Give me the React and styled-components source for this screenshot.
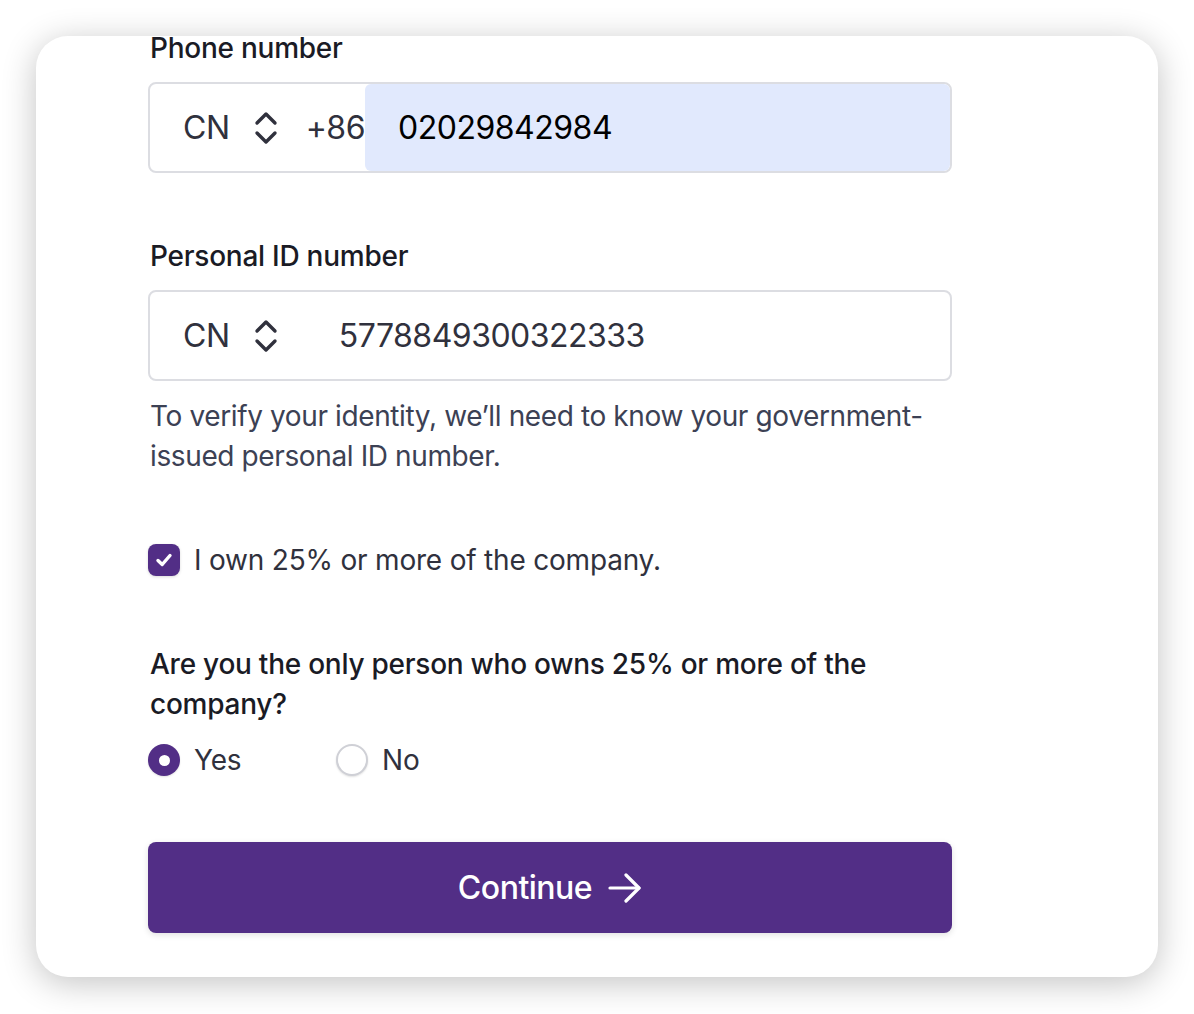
import React, { useState } from 'react';
import styled, { createGlobalStyle } from 'styled-components';

const GlobalStyle = createGlobalStyle`
  html, body {
    margin: 0;
    padding: 0;
    background: #ffffff;
  }
  body {
    font-family: Inter, "Noto Sans", "Liberation Sans", sans-serif;
    -webkit-font-smoothing: antialiased;
  }
  * {
    box-sizing: border-box;
  }
`;

const Page = styled.div`
  padding: 36px;
  width: 1194px;
  height: 1014px;
`;

const Card = styled.div`
  width: 1122px;
  height: 941px;
  background: #ffffff;
  border-radius: 32px;
  box-shadow: 0 6px 34px rgba(0, 0, 0, 0.24);
  padding: 0 206px 44px 112px;
  display: flex;
  flex-direction: column;
`;

const Label = styled.label`
  display: block;
  font-size: 28px;
  font-weight: 500;
  letter-spacing: -0.25px;
  color: #1a1b25;
  line-height: ${p => p.$lh || 40}px;
  margin-top: ${p => p.$mt || 0}px;
  margin-bottom: ${p => p.$mb || 0}px;
  padding-left: 2px;
`;

const InputBox = styled.div`
  display: flex;
  align-items: stretch;
  height: 91px;
  border: 2px solid #dcdde2;
  border-radius: 8px;
  background: #ffffff;
  overflow: hidden;
`;

const CountrySelect = styled.div`
  display: flex;
  align-items: center;
  gap: 24px;
  padding-left: 33px;
  font-size: 32px;
  letter-spacing: -0.4px;
  color: #30313d;
`;

const Prefix = styled.span`
  display: flex;
  align-items: center;
  margin-left: 28px;
  font-size: 32px;
  letter-spacing: -0.5px;
  color: #30313d;
`;

const Field = styled.input`
  flex: 1;
  min-width: 0;
  border: none;
  outline: none;
  margin: 0;
  font-family: inherit;
  font-size: 32px;
  letter-spacing: -0.5px;
  padding: 0 0 0 ${p => p.$pl}px;
  color: ${p => (p.$autofill ? '#000000' : '#30313d')};
  background: ${p => (p.$autofill ? '#e1e9fd' : 'transparent')};
  border-radius: ${p => (p.$autofill ? '6px' : '0')};
`;

const Help = styled.p`
  margin: 15px 0 0;
  padding-left: 2px;
  font-size: 28px;
  line-height: 40px;
  letter-spacing: -0.38px;
  color: #3c4154;
`;

const CheckRow = styled.label`
  display: flex;
  align-items: center;
  gap: 14px;
  height: 40px;
  margin-top: 64px;
  font-size: 28px;
  letter-spacing: -0.2px;
  color: #30313d;
`;

const CheckBox = styled.span`
  width: 32px;
  height: 32px;
  border-radius: 8px;
  background: #522e86;
  display: flex;
  align-items: center;
  justify-content: center;
  box-shadow: 0 1px 3px rgba(0, 0, 0, 0.15);
`;

const RadioGroup = styled.div`
  display: grid;
  grid-template-columns: 188px auto;
  margin-top: 16px;
  height: 40px;
`;

const Option = styled.label`
  display: flex;
  align-items: center;
  gap: 14px;
  font-size: 28px;
  letter-spacing: -0.2px;
  color: #30313d;
  cursor: pointer;
`;

const RadioDot = styled.span`
  width: 32px;
  height: 32px;
  border-radius: 50%;
  display: flex;
  align-items: center;
  justify-content: center;
  background: ${p => (p.$on ? '#522e86' : '#ffffff')};
  border: ${p => (p.$on ? 'none' : '2px solid #cfd0d6')};
  box-shadow: 0 1px 2px rgba(0, 0, 0, 0.12);

  &::after {
    content: '';
    display: ${p => (p.$on ? 'block' : 'none')};
    width: 11px;
    height: 11px;
    border-radius: 50%;
    background: #ffffff;
  }
`;

const Button = styled.button`
  margin-top: 62px;
  height: 91px;
  width: 100%;
  border: none;
  border-radius: 8px;
  background: #522e86;
  color: #ffffff;
  font-family: inherit;
  font-size: 32px;
  font-weight: 500;
  letter-spacing: -0.5px;
  display: flex;
  align-items: center;
  justify-content: center;
  gap: 16px;
  box-shadow: 0 2px 6px rgba(0, 0, 0, 0.12);
  cursor: pointer;
`;

function Chevrons() {
  return (
    <svg width="24" height="34" viewBox="0 0 24 34" fill="none" stroke="#30313d" strokeWidth="3.4" strokeLinecap="round" strokeLinejoin="round">
      <polyline points="3,12 12,3 21,12" />
      <polyline points="3,22 12,31 21,22" />
    </svg>
  );
}

function Check() {
  return (
    <svg width="20" height="20" viewBox="0 0 20 20" fill="none" stroke="#ffffff" strokeWidth="3.4" strokeLinecap="round" strokeLinejoin="round">
      <polyline points="4,10.5 8.2,14.5 16,5.5" />
    </svg>
  );
}

function Arrow() {
  return (
    <svg width="34" height="30" viewBox="0 0 34 30" fill="none" stroke="#ffffff" strokeWidth="3.2" strokeLinecap="round" strokeLinejoin="round">
      <line x1="2" y1="15" x2="31" y2="15" />
      <polyline points="18,2 31,15 18,28" />
    </svg>
  );
}

export default function App() {
  const [owner, setOwner] = useState(true);
  const [only, setOnly] = useState('yes');

  return (
    <Page>
      <GlobalStyle />
      <Card>
        <Label $lh={24} $mb={22}>Phone number</Label>
        <InputBox>
          <CountrySelect>
            CN
            <Chevrons />
          </CountrySelect>
          <Prefix>+86</Prefix>
          <Field $autofill $pl={33} defaultValue="02029842984" />
        </InputBox>

        <Label $mt={63} $mb={14}>Personal ID number</Label>
        <InputBox>
          <CountrySelect>
            CN
            <Chevrons />
          </CountrySelect>
          <Field $pl={61} defaultValue="5778849300322333" />
        </InputBox>
        <Help>
          To verify your identity, we’ll need to know your government-issued personal ID number.
        </Help>

        <CheckRow onClick={() => setOwner(!owner)}>
          <CheckBox>{owner && <Check />}</CheckBox>
          I own 25% or more of the company.
        </CheckRow>

        <Label $mt={64}>Are you the only person who owns 25% or more of the company?</Label>
        <RadioGroup>
          <Option onClick={() => setOnly('yes')}>
            <RadioDot $on={only === 'yes'} />
            Yes
          </Option>
          <Option onClick={() => setOnly('no')}>
            <RadioDot $on={only === 'no'} />
            No
          </Option>
        </RadioGroup>

        <Button>
          Continue
          <Arrow />
        </Button>
      </Card>
    </Page>
  );
}
